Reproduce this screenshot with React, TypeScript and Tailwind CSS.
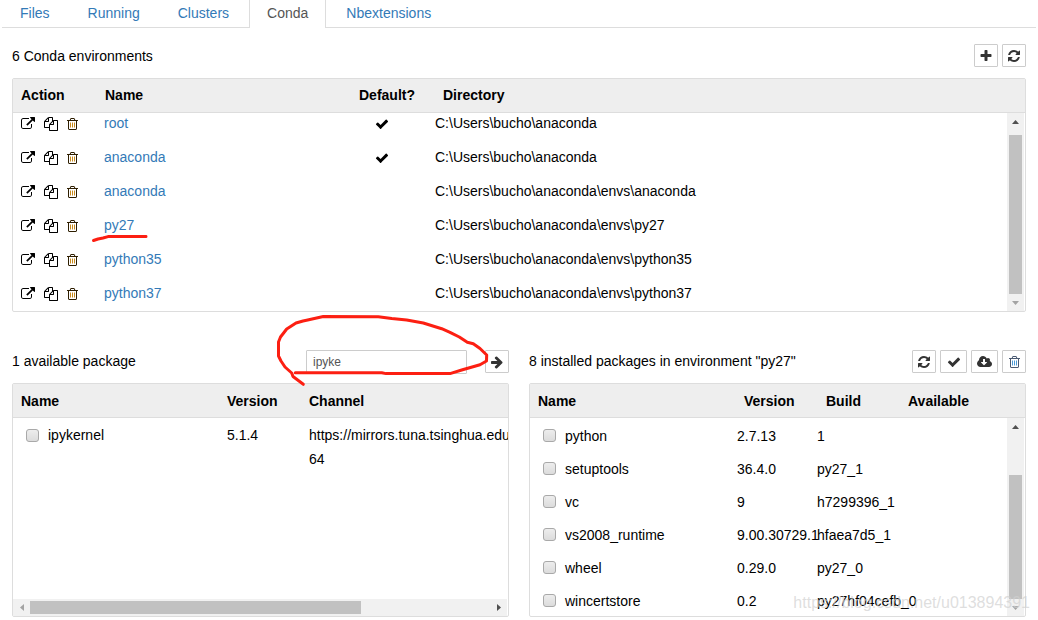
import type { ReactNode } from "react";

type IconProps = { path: string; box?: string; className?: string };

function Icon({ path, box = "0 0 1792 1792", className = "size-3.5" }: IconProps) {
  return (
    <svg viewBox={box} className={className} fill="currentColor" aria-hidden="true">
      <path d={path} />
    </svg>
  );
}

const EXTERNAL =
  "M1408 928v320q0 119-84.5 203.5t-203.5 84.5h-832q-119 0-203.5-84.5t-84.5-203.5v-832q0-119 84.5-203.5t203.5-84.5h704q14 0 23 9t9 23v64q0 14-9 23t-23 9h-704q-66 0-113 47t-47 113v832q0 66 47 113t113 47h832q66 0 113-47t47-113v-320q0-14 9-23t23-9h64q14 0 23 9t9 23zm384-864v512q0 26-19 45t-45 19-45-19l-176-176-652 652q-10 10-23 10t-23-10l-114-114q-10-10-10-23t10-23l652-652-176-176q-19-19-19-45t19-45 45-19h512q26 0 45 19t19 45z";
const FILES =
  "M1696 384q40 0 68 28t28 68v1216q0 40-28 68t-68 28h-960q-40 0-68-28t-28-68v-288h-544q-40 0-68-28t-28-68v-672q0-40 20-88t48-76l408-408q28-28 76-48t88-20h416q40 0 68 28t28 68v328q68-40 128-40h416zm-544 213l-299 299h299v-299zm-640-384l-299 299h299v-299zm196 647l316-316v-416h-384v416q0 40-28 68t-68 28h-416v640h512v-256q0-40 20-88t48-76zm956 804v-1152h-384v416q0 40-28 68t-68 28h-416v640h896z";
const TRASH_BARS =
  "M704 736v576q0 14-9 23t-23 9h-64q-14 0-23-9t-9-23v-576q0-14 9-23t23-9h64q14 0 23 9t9 23zm256 0v576q0 14-9 23t-23 9h-64q-14 0-23-9t-9-23v-576q0-14 9-23t23-9h64q14 0 23 9t9 23zm256 0v576q0 14-9 23t-23 9h-64q-14 0-23-9t-9-23v-576q0-14 9-23t23-9h64q14 0 23 9t9 23z";
const TRASH_CAN =
  "M1344 1460v-948h-896v948q0 22 7 40.5t14.5 27 10.5 8.5h832q3 0 10.5-8.5t14.5-27 7-40.5zm-672-1076h448l-48-117q-7-9-17-11h-317q-10 2-17 11zm928 32v64q0 14-9 23t-23 9h-96v948q0 83-47 143.5t-113 60.5h-832q-66 0-113-58.5t-47-141.5v-952h-96q-14 0-23-9t-9-23v-64q0-14 9-23t23-9h309l70-167q15-37 54-63t79-26h320q40 0 79 26t54 63l70 167h309q14 0 23 9t9 23z";
const CHECK =
  "M1671 566q0 40-28 68l-724 724-136 136q-28 28-68 28t-68-28l-136-136-362-362q-28-28-28-68t28-68l136-136q28-28 68-28t68 28l294 295 656-657q28-28 68-28t68 28l136 136q28 28 28 68z";
const PLUS =
  "M1600 736v192q0 40-28 68t-68 28h-416v416q0 40-28 68t-68 28h-192q-40 0-68-28t-28-68v-416h-416q-40 0-68-28t-28-68v-192q0-40 28-68t68-28h416v-416q0-40 28-68t68-28h192q40 0 68 28t28 68v416h416q40 0 68 28t28 68z";
const REFRESH =
  "M1639 1056q0 5-1 7-64 268-268 434.5t-478 166.5q-146 0-282.5-55t-243.5-157l-129 129q-19 19-45 19t-45-19-19-45v-448q0-26 19-45t45-19h448q26 0 45 19t19 45-19 45l-137 137q71 66 161 102t187 36q134 0 250-65t186-179q11-17 53-117 8-23 30-23h192q13 0 22.5 9.5t9.5 22.5zm25-800v448q0 26-19 45t-45 19h-448q-26 0-45-19t-19-45 19-45l138-138q-148-137-349-137-134 0-250 65t-186 179q-11 17-53 117-8 23-30 23h-199q-13 0-22.5-9.5t-9.5-22.5v-7q65-268 270-434.5t480-166.5q146 0 284 55.5t245 156.5l130-129q19-19 45-19t45 19 19 45z";
const ARROW =
  "M1600 960q0 54-37 91l-651 651q-39 37-91 37-51 0-90-37l-75-75q-38-38-38-91t38-91l293-293h-704q-52 0-84.5-37.5t-32.5-90.5v-128q0-53 32.5-90.5t84.5-37.5h704l-293-294q-38-36-38-90t38-90l75-75q38-38 90-38 53 0 91 38l651 651q37 35 37 90z";
const CLOUD =
  "M1216 928q0-14-9-23t-23-9h-224v-352q0-13-9.5-22.5t-22.5-9.5h-192q-13 0-22.5 9.5t-9.5 22.5v352h-224q-13 0-22.5 9.5t-9.5 22.5q0 14 9 23l352 352q9 9 23 9t23-9l351-351q10-12 10-24zm640 224q0 159-112.5 271.5t-271.5 112.5h-1088q-185 0-316.5-131.5t-131.5-316.5q0-130 70-240t188-165q-2-30-2-43 0-212 150-362t362-150q156 0 285.5 87t188.5 231q71-62 166-62 106 0 181 75t75 181q0 76-41 138 130 31 213.5 135.5t83.5 238.5z";

function Trash({ can, bars, className }: { can: string; bars: string; className: string }) {
  return (
    <svg viewBox="192 0 1408 1792" className={className} aria-hidden="true">
      <path d={TRASH_CAN} className={can} />
      <path d={TRASH_BARS} className={bars} />
    </svg>
  );
}

function ToolButton({ label, wide, children }: { label: string; wide?: boolean; children: ReactNode }) {
  return (
    <button
      type="button"
      aria-label={label}
      className={`flex h-[23px] items-center justify-center rounded-[1px] border border-[#ccc] bg-white text-[#333] ${
        wide ? "w-[27px]" : "w-6"
      }`}
    >
      {children}
    </button>
  );
}

function VerticalScrollbar({ before, thumb }: { before: number; thumb: number }) {
  return (
    <div className="mr-px flex w-[17px] flex-col bg-[#f1f1f1]" aria-hidden="true">
      <span className="flex h-[17px] items-center justify-center">
        <svg viewBox="0 0 7 4" className="h-1 w-[7px] fill-[#505050]"><path d="M0 4L3.5 0L7 4z" /></svg>
      </span>
      <div className="flex flex-1 flex-col px-0.5">
        <span style={{ flexGrow: before }} />
        <span className="bg-[#c1c1c1]" style={{ flexGrow: thumb }} />
      </div>
      <span className="flex h-[17px] items-center justify-center">
        <svg viewBox="0 0 7 4" className="h-1 w-[7px] fill-[#a3a3a3]"><path d="M0 0L3.5 4L7 0z" /></svg>
      </span>
    </div>
  );
}

function HorizontalScrollbar() {
  return (
    <div className="mr-px flex h-[17px] bg-[#f1f1f1]" aria-hidden="true">
      <span className="flex w-[17px] items-center justify-center">
        <svg viewBox="0 0 4 7" className="h-[7px] w-1 fill-[#a3a3a3]"><path d="M4 0L0 3.5L4 7z" /></svg>
      </span>
      <div className="flex flex-1 py-0.5">
        <span className="bg-[#c1c1c1]" style={{ flexGrow: 331 }} />
        <span style={{ flexGrow: 129 }} />
      </div>
      <span className="flex w-[17px] items-center justify-center">
        <svg viewBox="0 0 4 7" className="h-[7px] w-1 fill-[#505050]"><path d="M0 0L4 3.5L0 7z" /></svg>
      </span>
    </div>
  );
}

const PANEL = "rounded-[2px] border border-[#ddd]";
const HEAD = "col-span-2 block h-[34px] border-b border-[#ddd] bg-[#eee] text-left";
const CHECKBOX =
  "size-[13px] shrink-0 appearance-none rounded-[3px] border border-[#a9a9a9] bg-linear-to-b from-[#ededed] to-[#dcdcdc]";

const tabs = ["Files", "Running", "Clusters", "Conda", "Nbextensions"];

const environments = [
  { name: "root", isDefault: true, dir: "C:\\Users\\bucho\\anaconda" },
  { name: "anaconda", isDefault: true, dir: "C:\\Users\\bucho\\anaconda" },
  { name: "anaconda", dir: "C:\\Users\\bucho\\anaconda\\envs\\anaconda" },
  { name: "py27", marked: true, dir: "C:\\Users\\bucho\\anaconda\\envs\\py27" },
  { name: "python35", dir: "C:\\Users\\bucho\\anaconda\\envs\\python35" },
  { name: "python37", dir: "C:\\Users\\bucho\\anaconda\\envs\\python37" },
];

const installed = [
  ["python", "2.7.13", "1"],
  ["setuptools", "36.4.0", "py27_1"],
  ["vc", "9", "h7299396_1"],
  ["vs2008_runtime", "9.00.30729.1", "hfaea7d5_1"],
  ["wheel", "0.29.0", "py27_0"],
  ["wincertstore", "0.2", "py27hf04cefb_0"],
];

function Tabs() {
  return (
    <nav className="mx-0.5 flex h-7 gap-0.5 border-b border-[#ddd]">
      {tabs.map((tab) => (
        <a
          key={tab}
          href="#"
          className={
            tab === "Conda"
              ? "h-7 border-x border-[#ddd] bg-white px-[17px] leading-[27px] text-[#555]"
              : "h-7 border-x border-transparent px-[17px] leading-[27px] text-[#337ab7]"
          }
        >
          {tab}
        </a>
      ))}
    </nav>
  );
}

function Environments() {
  return (
    <section className="pt-4">
      <div className="mb-[10px] flex h-6 items-start justify-between">
        <h2 className="leading-6">6 Conda environments</h2>
        <div className="flex gap-1">
          <ToolButton label="New environment"><Icon path={PLUS} /></ToolButton>
          <ToolButton label="Refresh environments"><Icon path={REFRESH} /></ToolButton>
        </div>
      </div>
      <div className={`grid grid-cols-[minmax(0,1fr)_auto] ${PANEL}`}>
        <table className="contents">
          <thead className={`${HEAD} leading-[33px]`}>
            <tr className="grid grid-cols-[84px_254fr_84px_574fr] px-2">
              <th>Action</th>
              <th>Name</th>
              <th>Default?</th>
              <th>Directory</th>
            </tr>
          </thead>
          <tbody className="block h-[198px] overflow-hidden">
            {environments.map((env, i) => (
              <tr
                key={i}
                className="grid h-[34px] grid-cols-[83px_224fr_107px_572fr] pl-2 leading-8 first:-mt-1.5"
              >
                <td className="flex items-center gap-[9px]">
                  <button type="button" aria-label={`Export ${env.name}`}><Icon path={EXTERNAL} /></button>
                  <button type="button" aria-label={`Clone ${env.name}`}><Icon path={FILES} /></button>
                  <button type="button" aria-label={`Delete ${env.name}`}>
                    <Trash className="h-3.5 w-[11px]" can="fill-[#2e1e00]" bars="fill-[#c98a1c]" />
                  </button>
                </td>
                <td className="relative">
                  <a href="#" className="text-[#337ab7]">{env.name}</a>
                  {env.marked && (
                    <svg
                      viewBox="91 234 58 9"
                      className="absolute top-[25px] -left-[13px] h-[9px] w-[58px]"
                      fill="none"
                      aria-hidden="true"
                    >
                      <path
                        d="M93.5 240.5L98 239L103 238L108 236.6L146 236.4"
                        stroke="#fc1f12"
                        strokeWidth="3"
                        strokeLinecap="round"
                        strokeLinejoin="round"
                      />
                    </svg>
                  )}
                </td>
                <td className="flex items-center justify-center">{env.isDefault && <Icon path={CHECK} />}</td>
                <td>{env.dir}</td>
              </tr>
            ))}
          </tbody>
        </table>
        <VerticalScrollbar before={5} thumb={159} />
      </div>
    </section>
  );
}

function Available() {
  return (
    <section>
      <div className="mb-[9px] flex h-6 items-start justify-between">
        <h2 className="leading-[23px]">1 available package</h2>
        <div className="flex gap-[18px]">
          <div className="relative">
            <input
              type="text"
              aria-label="Search packages"
              defaultValue="ipyke"
              className="block h-6 w-[161px] rounded-[1px] border border-[#ccc] bg-white px-1.5 text-[12px] text-[#555] outline-none"
            />
            <svg
              viewBox="276 314 214 74"
              className="pointer-events-none absolute -top-9 -left-[30px] z-10 h-[74px] w-[214px] max-w-none"
              fill="none"
              aria-hidden="true"
            >
              <path
                d="M295.3 372.7L381.7 372.7L386 373.6L450 373.6L461.7 370L480 364.7L486.5 361L486.7 355L480 348.5L473.3 343.7L467.3 342.3L459.3 337L450 332.3L441.7 328.7L423.3 323L406.7 320L391.7 318.5L378.3 316.7L323.3 316.5L307.7 320L303 321L296 323L286.7 329L280.5 337L278.5 342L278.5 356L281 361L285 367L291.7 373L293 376.5L303.3 384.3"
                stroke="#fc1f12"
                strokeWidth="3"
                strokeLinecap="round"
                strokeLinejoin="round"
              />
            </svg>
          </div>
          <ToolButton label="Install selected packages"><Icon path={ARROW} /></ToolButton>
        </div>
      </div>
      <div className={PANEL}>
        <table className="block">
          <thead className={`${HEAD} leading-[34px]`}>
            <tr className="grid h-[33px] grid-cols-[206fr_82fr_199fr] pl-2">
              <th>Name</th>
              <th>Version</th>
              <th>Channel</th>
            </tr>
          </thead>
          <tbody className="block h-[181px] overflow-hidden">
            <tr className="grid grid-cols-[minmax(0,201fr)_minmax(0,82fr)_minmax(0,199fr)] pt-[5px] pl-[13px] leading-6">
              <td>
                <label className="flex items-center gap-[9px]">
                  <input type="checkbox" className={CHECKBOX} />
                  ipykernel
                </label>
              </td>
              <td>5.1.4</td>
              <td className="whitespace-nowrap">
                https://mirrors.tuna.tsinghua.edu
                <br />
                64
              </td>
            </tr>
          </tbody>
        </table>
        <HorizontalScrollbar />
      </div>
    </section>
  );
}

function Installed() {
  return (
    <section className="relative">
      <div className="mb-[9px] flex h-6 items-start justify-between">
        <h2 className="leading-[23px]">8 installed packages in environment "py27"</h2>
        <div className="flex gap-1">
          <ToolButton label="Refresh packages"><Icon path={REFRESH} /></ToolButton>
          <ToolButton label="Check for updates" wide><Icon path={CHECK} /></ToolButton>
          <ToolButton label="Update packages" wide>
            <Icon path={CLOUD} box="-64 0 1920 1792" className="h-3.5 w-[15px]" />
          </ToolButton>
          <ToolButton label="Delete packages">
            <Trash className="h-3.5 w-[11px]" can="fill-[#4a5a72]" bars="fill-[#4a9ad8]" />
          </ToolButton>
        </div>
      </div>
      <div className={`grid grid-cols-[minmax(0,1fr)_auto] ${PANEL}`}>
        <table className="contents">
          <thead className={`${HEAD} leading-[34px]`}>
            <tr className="grid h-[33px] grid-cols-[206fr_82fr_82fr_117fr] pl-2">
              <th>Name</th>
              <th>Version</th>
              <th>Build</th>
              <th>Available</th>
            </tr>
          </thead>
          <tbody className="block h-[198px] overflow-hidden pt-px">
            {installed.map(([name, version, build]) => (
              <tr
                key={name}
                className="grid h-[33px] grid-cols-[minmax(0,194fr)_minmax(0,80fr)_minmax(0,190fr)] pl-[13px] leading-[34px] whitespace-nowrap"
              >
                <td>
                  <label className="flex h-[33px] items-center gap-[9px]">
                    <input type="checkbox" className={CHECKBOX} />
                    {name}
                  </label>
                </td>
                <td>{version}</td>
                <td>{build}</td>
              </tr>
            ))}
          </tbody>
        </table>
        <VerticalScrollbar before={40} thumb={124} />
      </div>
      <span className="pointer-events-none absolute -right-1 bottom-0.5 text-[16px] leading-6 text-[#d0d0d0]/70">
        https://blog.csdn.net/u013894391
      </span>
    </section>
  );
}

export default function App() {
  return (
    <div className="bg-white font-['Liberation_Sans',Arial,sans-serif] text-[14px] text-black">
      <Tabs />
      <main className="px-3">
        <Environments />
        <div className="mt-[38px] grid grid-cols-2 gap-5">
          <Available />
          <Installed />
        </div>
      </main>
    </div>
  );
}
